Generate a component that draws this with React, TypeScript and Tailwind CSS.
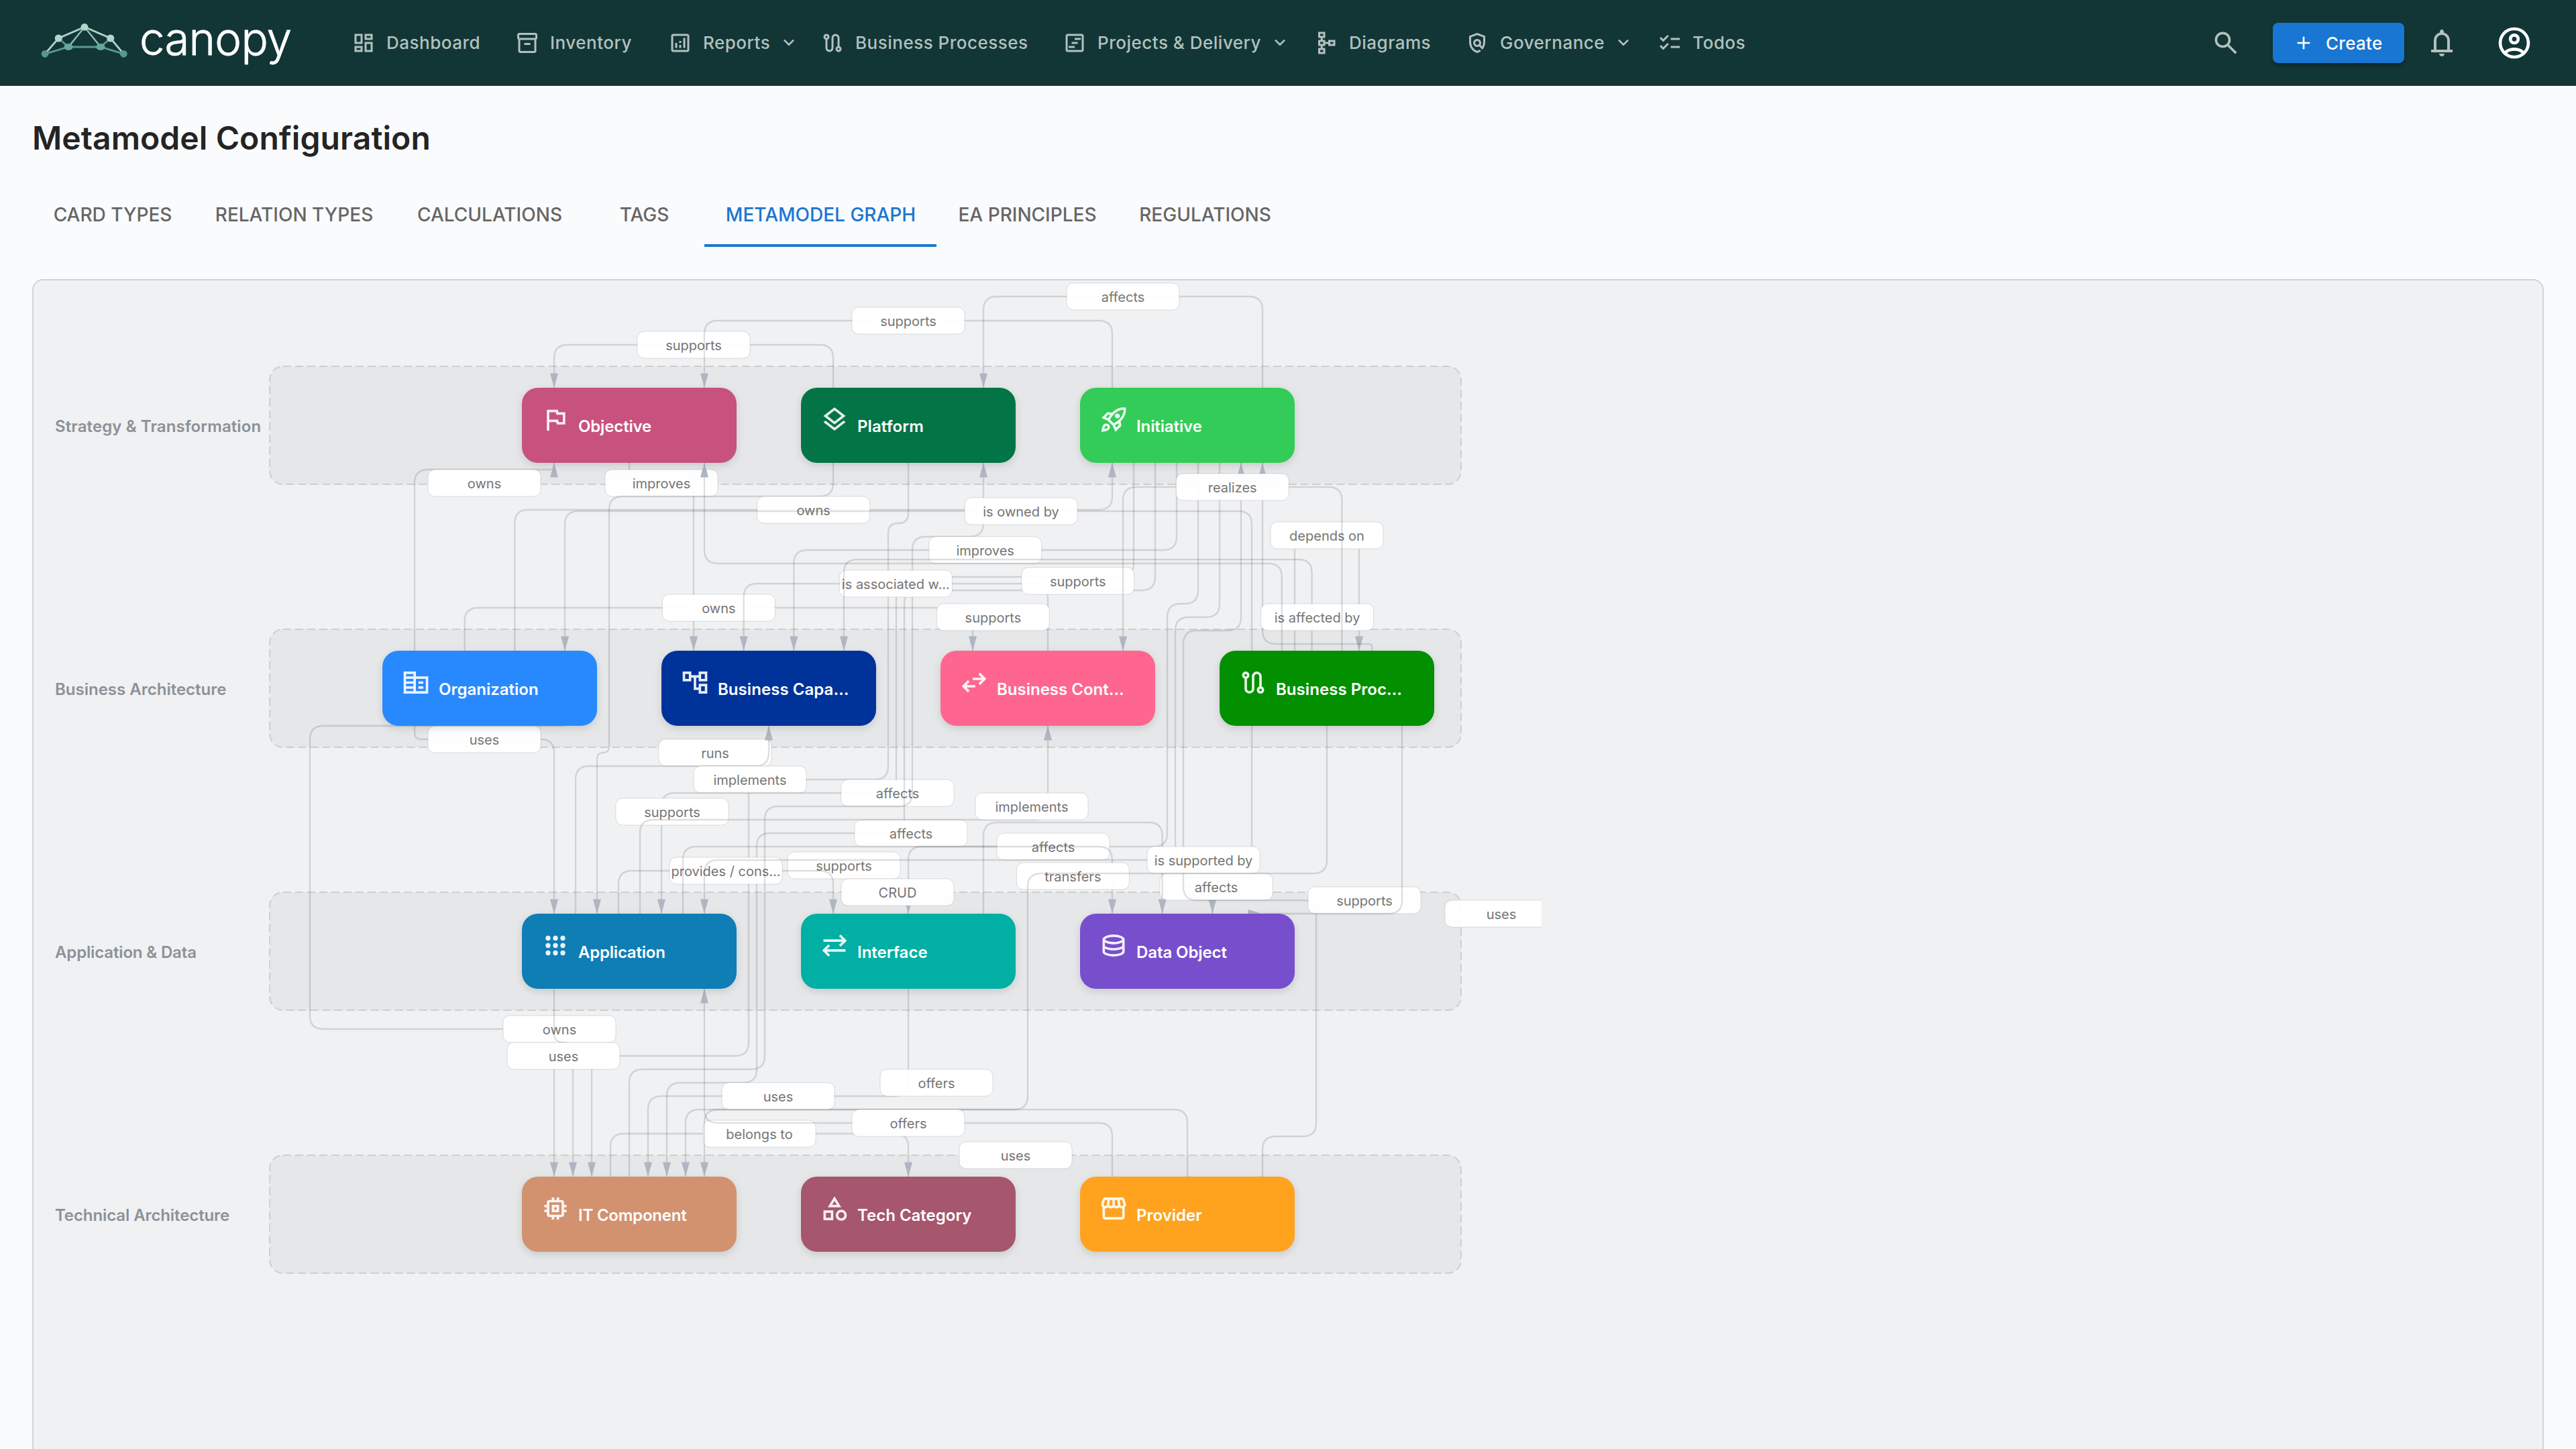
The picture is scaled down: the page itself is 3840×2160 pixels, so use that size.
import clsx from "clsx";

// Outlined icon glyphs, all on a 960 unit grid
const ICONS: Record<string, string> = {
    dashboard: "M520-600v-240h320v240H520ZM120-440v-400h320v400H120Zm400 320v-400h320v400H520Zm-400 0v-240h320v240H120Zm80-400h160v-240H200v240Zm400 320h160v-240H600v240Zm0-480h160v-80H600v80ZM200-200h160v-80H200v80Z",
    inventory: "M200-80q-33 0-56.5-23.5T120-160v-451q-18-11-29-28.5T80-680v-120q0-33 23.5-56.5T160-880h640q33 0 56.5 23.5T880-800v120q0 23-11 40.5T840-611v451q0 33-23.5 56.5T760-80H200Zm0-520v440h560v-440H200Zm-40-80h640v-120H160v120Zm200 280h240v-80H360v80Z",
    analytics: "M280-280h80v-200h-80v200Zm320 0h80v-400h-80v400Zm-160 0h80v-120h-80v120Zm0-200h80v-80h-80v80ZM200-120q-33 0-56.5-23.5T120-200v-560q0-33 23.5-56.5T200-840h560q33 0 56.5 23.5T840-760v560q0 33-23.5 56.5T760-120H200Zm0-80h560v-560H200v560Z",
    route: "M360-120q-66 0-113-47t-47-113v-327q-35-13-57.5-43.5T120-720q0-50 35-85t85-35q50 0 85 35t35 85q0 39-22.5 69.5T280-607v327q0 33 23.5 56.5T360-200q33 0 56.5-23.5T440-280v-400q0-66 47-113t113-47q66 0 113 47t47 113v327q35 13 57.5 43.5T840-240q0 50-35 85t-85 35q-50 0-85-35t-35-85q0-39 22.5-70t57.5-43v-327q0-33-23.5-56.5T600-760q-33 0-56.5 23.5T520-680v400q0 66-47 113t-113 47ZM240-680q17 0 28.5-11.5T280-720q0-17-11.5-28.5T240-760q-17 0-28.5 11.5T200-720q0 17 11.5 28.5T240-680Zm480 480q17 0 28.5-11.5T760-240q0-17-11.5-28.5T720-280q-17 0-28.5 11.5T680-240q0 17 11.5 28.5T720-200Z",
    timeline: "M240-280h240v-80H240v80Zm120-160h240v-80H360v80Zm120-160h240v-80H480v80ZM200-120q-33 0-56.5-23.5T120-200v-560q0-33 23.5-56.5T200-840h560q33 0 56.5 23.5T840-760v560q0 33-23.5 56.5T760-120H200Zm0-80h560v-560H200v560Z",
    schema: "M160-40v-240h100v-80H160v-240h100v-80H160v-240h280v240H340v80h100v80h120v-80h280v240H560v-80H440v80H340v80h100v240H160Zm80-80h120v-80H240v80Zm0-320h120v-80H240v80Zm400 0h120v-80H640v80ZM240-760h120v-80H240v80Z",
    policy: "M480-80q-139-35-229.5-159.5T160-516v-244l320-120 320 120v244q0 85-29 163.5T688-214L560-342q-18 11-38.5 16.5T480-320q-66 0-113-47t-47-113q0-66 47-113t113-47q66 0 113 47t47 113q0 22-5.5 42.5T618-398l60 60q20-41 31-86t11-92v-189l-240-90-240 90v189q0 121 68 220t172 132q26-8 49.5-20.5T576-214l56 56q-33 27-71.5 47T480-80Zm0-320q33 0 56.5-23.5T560-480q0-33-23.5-56.5T480-560q-33 0-56.5 23.5T400-480q0 33 23.5 56.5T480-400Z",
    checklist: "M222-200 80-342l56-56 85 85 170-170 56 57-225 226Zm0-320L80-662l56-56 85 85 170-170 56 57-225 226Zm298 240v-80h360v80H520Zm0-320v-80h360v80H520Z",
    expand: "M480-344 240-584l56-56 184 184 184-184 56 56-240 240Z",
    add: "M440-440H200v-80h240v-240h80v240h240v80H520v240h-80v-240Z",
    search: "M784-120 532-372q-30 24-69 38t-83 14q-109 0-184.5-75.5T120-580q0-109 75.5-184.5T380-840q109 0 184.5 75.5T640-580q0 44-14 83t-38 69l252 252-56 56ZM380-400q75 0 127.5-52.5T560-580q0-75-52.5-127.5T380-760q-75 0-127.5 52.5T200-580q0 75 52.5 127.5T380-400Z",
    bell: "M160-200v-80h80v-280q0-83 50-147.5T420-792v-28q0-25 17.5-42.5T480-880q25 0 42.5 17.5T540-820v28q80 20 130 84.5T720-560v280h80v80H160Zm320-300Zm0 420q-33 0-56.5-23.5T400-160h160q0 33-23.5 56.5T480-80ZM320-280h320v-280q0-66-47-113t-113-47q-66 0-113 47t-47 113v280Z",
    account: "M234-276q51-39 114-61.5T480-360q69 0 132 22.5T726-276q35-41 54.5-93T800-480q0-133-93.5-226.5T480-800q-133 0-226.5 93.5T160-480q0 59 19.5 111t54.5 93Zm246-164q-59 0-99.5-40.5T340-580q0-59 40.5-99.5T480-720q59 0 99.5 40.5T620-580q0 59-40.5 99.5T480-440Zm0 360q-83 0-156-31.5T197-197q-54-54-85.5-127T80-480q0-83 31.5-156T197-763q54-54 127-85.5T480-880q83 0 156 31.5T763-763q54 54 85.5 127T880-480q0 83-31.5 156T763-197q-54 54-127 85.5T480-80Zm0-80q53 0 100-15.5t86-44.5q-39-29-86-44.5T480-280q-53 0-100 15.5T294-220q39 29 86 44.5T480-160Zm0-360q26 0 43-17t17-43q0-26-17-43t-43-17q-26 0-43 17t-17 43q0 26 17 43t43 17Z",
    flag: "M200-120v-680h360l16 80h224v400H520l-16-80H280v280h-80Zm386-280h134v-240H510l-16-80H280v240h290l16 80Z",
    layers: "M480-118 120-398l66-50 294 228 294-228 66 50-360 280Zm0-202L120-600l360-280 360 280-360 280Zm0-102 230-178-230-178-230 178 230 178Z",
    rocket: "m226-559 78 33q14-28 29-54t33-52l-56-11-84 84Zm142 83 114 113q42-16 90-49t90-75q70-70 109.5-155.5T806-800q-72-5-158 34.5T492-656q-42 42-75 90t-49 90Zm178-65q-23-23-23-56.5t23-56.5q23-23 57-23t57 23q23 23 23 56.5T660-541q-23 23-57 23t-57-23Zm19 321 84-84-11-56q-26 18-52 32.5T532-299l33 79Zm313-653q19 121-23.5 235.5T708-419l20 99q4 20-2 39t-20 33L538-80l-84-197-171-171-197-84 167-168q14-14 33.5-20t39.5-2l99 20q104-104 218-147t235-24ZM157-321q35-35 85.5-35.5T328-322q35 35 34.5 85.5T327-151q-25 25-83.5 43T82-76q14-103 32-161.5t43-83.5Zm57 56q-10 10-20 36.5T180-175q27-4 53.5-13.5T270-208q12-12 13-29t-11-29q-12-12-29-11.5T214-265Z",
    corporate: "M80-120v-720h400v160h400v560H80Zm80-80h240v-80H160v80Zm0-160h240v-80H160v80Zm0-160h240v-80H160v80Zm0-160h240v-80H160v80Zm320 480h320v-400H480v400Zm80-240v-80h160v80H560Zm0 160v-80h160v80H560Z",
    tree: "M600-120v-120H440v-400h-80v120H80v-320h280v120h240v-120h280v320H600v-120h-80v320h80v-120h280v320H600ZM680-600h120v-160H680v160Zm0 400h120v-160H680v160ZM160-600h120v-160H160v160Z",
    swap: "M280-160 80-360l200-200 56 57-103 103h287v80H233l103 103-56 57Zm400-240-56-57 103-103H440v-80h287L624-743l56-57 200 200-200 200Z",
    sync: "M280-120 80-320l200-200 57 56-104 104h607v80H233l104 104-57 56Zm400-320-57-56 104-104H120v-80h607L623-784l57-56 200 200-200 200Z",
    apps: "M240-160a80 80 0 1 1 0-160a80 80 0 1 1 0 160Zm240 0a80 80 0 1 1 0-160a80 80 0 1 1 0 160Zm240 0a80 80 0 1 1 0-160a80 80 0 1 1 0 160ZM240-400a80 80 0 1 1 0-160a80 80 0 1 1 0 160Zm240 0a80 80 0 1 1 0-160a80 80 0 1 1 0 160Zm240 0a80 80 0 1 1 0-160a80 80 0 1 1 0 160ZM240-640a80 80 0 1 1 0-160a80 80 0 1 1 0 160Zm240 0a80 80 0 1 1 0-160a80 80 0 1 1 0 160Zm240 0a80 80 0 1 1 0-160a80 80 0 1 1 0 160Z",
    database: "M480-120q-151 0-255.5-46.5T120-280v-400q0-66 105.5-113T480-840q149 0 254.5 47T840-680v400q0 67-104.5 113.5T480-120Zm0-479q89 0 179-25.5T760-679q-11-29-100.5-55T480-760q-91 0-178.5 25.5T200-679q14 30 101.5 55T480-599Zm0 199q42 0 81-4t74.5-11.5q35.5-7.5 67-18.5t57.5-25v-120q-26 14-57.5 25t-67 18.5Q600-528 561-524t-81 4q-42 0-82-4t-75.5-11.5Q287-543 256-554t-56-25v120q25 14 56 25t66.5 18.5Q358-408 398-404t82 4Zm0 200q46 0 93.5-7t87.5-18.5q40-11.5 67-26t32-29.5v-98q-26 14-57.5 25t-67 18.5Q600-328 561-324t-81 4q-42 0-82-4t-75.5-11.5Q287-343 256-354t-56-25v99q5 15 31.5 29t66.5 25.5q40 11.5 88 18.5t94 7Z",
    memory: "M360-360v-240h240v240H360Zm80-80h80v-80h-80v80Zm-80 320v-80h-80q-33 0-56.5-23.5T200-280v-80h-80v-80h80v-80h-80v-80h80v-80q0-33 23.5-56.5T280-760h80v-80h80v80h80v-80h80v80h80q33 0 56.5 23.5T760-680v80h80v80h-80v80h80v80h-80v80q0 33-23.5 56.5T680-200h-80v80h-80v-80h-80v80h-80Zm320-160v-400H280v400h400Z",
    category: "m260-520 220-360 220 360H260ZM700-80q-75 0-127.5-52.5T520-260q0-75 52.5-127.5T700-440q75 0 127.5 52.5T880-260q0 75-52.5 127.5T700-80Zm-580-20v-320h320v320H120Zm580-60q42 0 71-29t29-71q0-42-29-71t-71-29q-42 0-71 29t-29 71q0 42 29 71t71 29Zm-500-20h160v-160H200v160Zm202-420h156l-78-126-78 126Z",
    storefront: "M841-518v318q0 33-23.5 56.5T761-120H201q-33 0-56.5-23.5T121-200v-318q-23-21-35.5-54t-.5-72l42-136q8-26 28.5-43t47.5-17h556q27 0 47 16.5t29 43.5l42 136q12 39-.5 71T841-518Zm-272-42q27 0 41-18.5t11-41.5l-22-140h-78v148q0 21 14 36.5t34 15.5Zm-180 0q23 0 37.5-15.5T441-612v-148h-78l-22 140q-4 24 10.5 42t37.5 18Zm-178 0q18 0 31.5-13t16.5-33l22-154h-78l-40 134q-6 20 6.5 43t41.5 23Zm540 0q29 0 42-23t6-43l-42-134h-76l22 154q3 20 16.5 33t31.5 13ZM201-200h560v-282q-5 2-6.5 2H751q-27 0-47.5-9T663-518q-18 18-41 28t-49 10q-27 0-50.5-10T481-518q-17 18-39.5 28T393-480q-29 0-52.5-10T299-518q-21 21-41.5 29.5T211-480h-4.5q-2.5 0-5.5-2v282Z",
};

function Icon({ name, className }: { name: string; className?: string }) {
    return (
        <svg viewBox="0 -960 960 960" fill="currentColor" className={clsx("shrink-0", className)}>
            <path d={ICONS[name]} />
        </svg>
    );
}

const NAV = [
    { label: "Dashboard", icon: "dashboard", width: "w-[244px]" },
    { label: "Inventory", icon: "inventory", width: "w-[228px]" },
    { label: "Reports", icon: "analytics", width: "w-[227px]", menu: true },
    { label: "Business Processes", icon: "route", width: "w-[361px]" },
    { label: "Projects & Delivery", icon: "timeline", width: "w-[375px]", menu: true },
    { label: "Diagrams", icon: "schema", width: "w-[225px]" },
    { label: "Governance", icon: "policy", width: "w-[287px]", menu: true },
    { label: "Todos", icon: "checklist", width: "w-[180px]" },
];

const TABS = [
    { label: "CARD TYPES", width: "w-[239px]" },
    { label: "RELATION TYPES", width: "w-[302px]" },
    { label: "CALCULATIONS", width: "w-[281px]" },
    { label: "TAGS", width: "w-[180px]" },
    { label: "METAMODEL GRAPH", width: "w-[346px]", active: true },
    { label: "EA PRINCIPLES", width: "w-[270px]" },
    { label: "REGULATIONS", width: "w-[260px]" },
];

const LAYERS = [
    { label: "Strategy & Transformation", y: 546, tracking: 0.1 },
    { label: "Business Architecture", y: 938, tracking: 0 },
    { label: "Application & Data", y: 1330, tracking: -0.15 },
    { label: "Technical Architecture", y: 1722, tracking: -0.1 },
];

const NODES = [
    { label: "Objective", icon: "flag", color: "#c7527d", x: 778, y: 578, tracking: -0.15 },
    { label: "Platform", icon: "layers", color: "#027446", x: 1194, y: 578, tracking: 0.1 },
    { label: "Initiative", icon: "rocket", color: "#33cc58", x: 1610, y: 578, tracking: -0.1 },
    { label: "Organization", icon: "corporate", color: "#2889ff", x: 570, y: 970 },
    { label: "Business Capa…", icon: "tree", color: "#003399", x: 986, y: 970, tracking: 0.05 },
    { label: "Business Cont…", icon: "swap", color: "#fe6690", x: 1402, y: 970 },
    { label: "Business Proc…", icon: "route", color: "#028f00", x: 1818, y: 970, tracking: 0.05 },
    { label: "Application", icon: "apps", color: "#0f7eb5", x: 778, y: 1362, tracking: -0.22 },
    { label: "Interface", icon: "sync", color: "#02afa4", x: 1194, y: 1362 },
    { label: "Data Object", icon: "database", color: "#774fcc", x: 1610, y: 1362, tracking: -0.1 },
    { label: "IT Component", icon: "memory", color: "#d29270", x: 778, y: 1754, tracking: -0.22 },
    { label: "Tech Category", icon: "category", color: "#a6566d", x: 1194, y: 1754 },
    { label: "Provider", icon: "storefront", color: "#ffa31f", x: 1610, y: 1754 },
];

type Point = [number, number];
type Edge = { pts: Point[]; label?: string; at?: Point };

// Drawn in order, so later edges run over the labels of earlier ones
const EDGES: Edge[] = [
    { pts: [[1242, 578], [1242, 514], [826, 514], [826, 578]], label: "supports", at: [1034, 514] },
    { pts: [[1658, 578], [1658, 478], [1050, 478], [1050, 578]], label: "supports", at: [1354, 478] },
    { pts: [[1882, 578], [1882, 442], [1466, 442], [1466, 578]], label: "affects", at: [1674, 442] },
    { pts: [[938, 690], [938, 720], [1034, 720], [1034, 970]], label: "improves", at: [986, 720] },
    { pts: [[1242, 690], [1242, 740], [908, 740], [908, 1122], [890, 1122], [890, 1362]], label: "runs", at: [1066, 1122] },
    { pts: [[618, 970], [618, 700], [826, 700], [826, 690]], label: "owns", at: [722, 720] },
    { pts: [[767.33, 970], [767.33, 760], [1658, 760], [1658, 690]], label: "owns", at: [1212.67, 760] },
    { pts: [[692.67, 970], [692.67, 906], [1450, 906], [1450, 970]], label: "owns", at: [1071.33, 906] },
    { pts: [[1354, 690], [1354, 780], [1324, 780], [1324, 1162], [1116, 1162], [1116, 1574], [882, 1574], [882, 1754]], label: "supports", at: [1258, 1290] },
    { pts: [[858, 1362], [858, 1142], [1146, 1142], [1146, 1082]], label: "implements", at: [1118, 1162] },
    { pts: [[1690, 690], [1690, 860], [1336, 860], [1336, 1182], [986, 1182], [986, 1362]], label: "affects", at: [1338, 1182] },
    { pts: [[1722, 690], [1722, 880], [1348, 880], [1348, 1242], [1128, 1242], [1128, 1614], [994, 1614], [994, 1754]], label: "affects", at: [1358, 1242] },
    { pts: [[922, 1362], [922, 1298], [1242, 1298], [1242, 1362]], label: "provides / cons…", at: [1082, 1298] },
    { pts: [[938, 1754], [938, 1594], [1140, 1594], [1140, 1202], [1360, 1202], [1360, 800], [1466, 800], [1466, 690]], label: "supports", at: [1002, 1210] },
    { pts: [[954, 1362], [954, 1222], [1562, 1222], [1562, 1082]], label: "implements", at: [1538, 1202] },
    { pts: [[1866, 970], [1866, 762], [842, 762], [842, 970]], label: "is owned by", at: [1522, 762] },
    { pts: [[1562, 970], [1562, 870], [1108.67, 870], [1108.67, 970]], label: "is associated w…", at: [1335.33, 870] },
    { pts: [[1754, 690], [1754, 820], [1183.33, 820], [1183.33, 970]], label: "improves", at: [1468.67, 820] },
    { pts: [[1930, 970], [1930, 798], [2026, 798], [2026, 970]], label: "depends on", at: [1978, 798] },
    { pts: [[1955.6, 970], [1955.6, 834], [1258, 834], [1258, 970]], label: "supports", at: [1606.8, 866] },
    { pts: [[2045.2, 970], [2045.2, 960], [1882, 960], [1882, 690]], label: "is affected by", at: [1963.6, 920] },
    { pts: [[1910.8, 970], [1910.8, 840], [1050, 840], [1050, 690]], label: "supports", at: [1480.4, 920] },
    { pts: [[1786, 690], [1786, 900], [1740, 900], [1740, 1262], [1354, 1262], [1354, 1362]], label: "affects", at: [1570, 1262] },
    { pts: [[1018, 1362], [1018, 1262], [1658, 1262], [1658, 1362]], label: "CRUD", at: [1338, 1330] },
    { pts: [[1818, 690], [1818, 920], [1752, 920], [1752, 1322], [1807.33, 1322], [1807.33, 1362]], label: "affects", at: [1813, 1322] },
    { pts: [[1466, 1362], [1466, 1226], [1732.67, 1226], [1732.67, 1362]], label: "transfers", at: [1599.33, 1306] },
    { pts: [[1882, 1754], [1882, 1694], [1962, 1694], [1962, 1342], [1764, 1342], [1764, 940], [1850, 940], [1850, 690]], label: "supports", at: [2034, 1342] },
    { pts: [[1866, 1082], [1866, 1282], [1050, 1282], [1050, 1362]], label: "is supported by", at: [1794, 1282] },
    { pts: [[1978, 1082], [1978, 1302], [1532, 1302], [1532, 1654], [1022, 1654], [1022, 1754]], label: "uses", at: [1514, 1722] },
    { pts: [[2090, 1082], [2090, 1362], [1882, 1362]], label: "uses", at: [2238, 1362] },
    { pts: [[618, 1082], [618, 1102], [826, 1102], [826, 1362]], label: "uses", at: [722, 1102] },
    { pts: [[842, 1082], [462, 1082], [462, 1534], [826, 1534], [826, 1754]], label: "owns", at: [834, 1534] },
    { pts: [[826, 1474], [826, 1554], [854, 1554], [854, 1754]], label: "uses", at: [840, 1574] },
    { pts: [[1354, 1474], [1354, 1634], [966, 1634], [966, 1754]], label: "uses", at: [1160, 1634] },
    { pts: [[910, 1754], [910, 1690], [1354, 1690], [1354, 1754]], label: "belongs to", at: [1132, 1690] },
    { pts: [[1770, 1754], [1770, 1654], [1050, 1654], [1050, 1754]], label: "offers", at: [1396, 1614] },
    { pts: [[1658, 1754], [1658, 1674], [1050, 1674], [1050, 1474]], label: "offers", at: [1354, 1674] },
    { pts: [[2000.4, 970], [2000.4, 726], [1674, 726], [1674, 970]], label: "realizes", at: [1837.2, 726] },
];

const CORNER = 20;

// Orthogonal polyline with softened corners
function edgePath(pts: Point[]) {
    let d = `M${pts[0][0]} ${pts[0][1]}`;
    for (let i = 1; i < pts.length - 1; i++) {
        const [px, py] = pts[i - 1];
        const [x, y] = pts[i];
        const [nx, ny] = pts[i + 1];
        const a = Math.abs(x - px) + Math.abs(y - py);
        const b = Math.abs(nx - x) + Math.abs(ny - y);
        const r = Math.min(CORNER, a / 2, b / 2);
        d += `L${x - Math.sign(x - px) * r} ${y - Math.sign(y - py) * r}`;
        d += `Q${x} ${y} ${x + Math.sign(nx - x) * r} ${y + Math.sign(ny - y) * r}`;
    }
    const [ex, ey] = pts[pts.length - 1];
    return `${d}L${ex} ${ey}`;
}

const HEADLESS = ["938,1754"];

function arrowPath(pts: Point[]) {
    const [px, py] = pts[pts.length - 2];
    const [x, y] = pts[pts.length - 1];
    if (HEADLESS.includes(`${x},${y}`)) return "";
    if (y === py) return `M${x} ${y}l-21.6-6v12Z`;
    const s = Math.sign(y - py);
    return px === x ? `M${x} ${y}l-6 ${-21.6 * s}h12Z` : "";
}

function EdgeLine({ edge }: { edge: Edge }) {
    return (
        <g>
            <path d={edgePath(edge.pts)} fill="none" stroke="#000" strokeOpacity={0.125} strokeWidth={2.4} />
            <path d={arrowPath(edge.pts)} fill="#aeb6c2" />
            {edge.label && edge.at && (
                <>
                    <rect
                        x={edge.at[0] - 84}
                        y={edge.at[1] - 20}
                        width={168}
                        height={40}
                        rx={10}
                        fill="#fff"
                        fillOpacity={0.95}
                        stroke="#000"
                        strokeOpacity={0.12}
                        strokeWidth={1}
                    />
                    <text x={edge.at[0]} y={edge.at[1] + 7.5} textAnchor="middle" className="fill-[#757575] text-[20px]">
                        {edge.label}
                    </text>
                </>
            )}
        </g>
    );
}

function MetamodelGraph() {
    return (
        <svg width={2248} height={1520} viewBox="50 418 2248 1520" className="block">
            {LAYERS.map((layer) => (
                <g key={layer.label}>
                    <rect
                        x={402}
                        y={layer.y}
                        width={1776}
                        height={176}
                        rx={20}
                        fill="#000"
                        fillOpacity={0.04}
                        stroke="#000"
                        strokeOpacity={0.12}
                        strokeWidth={2}
                        strokeDasharray="12 6"
                    />
                    <text x={82} y={layer.y + 98} letterSpacing={layer.tracking} className="fill-[#8c9196] text-[24px] font-semibold">
                        {layer.label}
                    </text>
                </g>
            ))}
            {EDGES.map((edge, i) => (
                <EdgeLine key={i} edge={edge} />
            ))}
            {NODES.map((node) => (
                <g key={node.label} transform={`translate(${node.x} ${node.y})`}>
                    <rect width={320} height={112} rx={24} fill={node.color} className="drop-shadow-[0_4px_6px_rgba(0,0,0,0.12)]" />
                    <path
                        d={ICONS[node.icon]}
                        transform="translate(28 69.5) scale(0.045833)"
                        fill="#fff"
                        fillOpacity={0.9}
                    />
                    <text x={84} y={66} letterSpacing={node.tracking} className="fill-white text-[24px] font-semibold">
                        {node.label}
                    </text>
                </g>
            ))}
        </svg>
    );
}

function Logo() {
    return (
        <svg width={392} height={84} viewBox="56 22 392 84" className="shrink-0 overflow-visible">
            <g strokeWidth={2.8} fill="none">
                <path d="M67 80.3 102 70 150 70 184.3 80.3M87.3 57 102 70M164.7 57 150 70" stroke="#599a90" />
                <path d="M102 70 126 40.3 150 70" stroke="#93c1b8" strokeWidth={2.4} />
                <path d="M67 80.3 87.3 57 126 40.3 164.7 57 184.3 80.3" stroke="#aed3cb" />
            </g>
            <g fill="#b1d5cd">
                <circle cx={126} cy={40.3} r={5.4} />
                <circle cx={87.3} cy={57} r={5.6} />
                <circle cx={164.7} cy={57} r={5.6} />
            </g>
            <g fill="#68a79d">
                <ellipse cx={102} cy={70} rx={6.6} ry={5} />
                <ellipse cx={150} cy={70} rx={6.6} ry={5} />
            </g>
            <g fill="#57978d">
                <circle cx={67} cy={80.3} r={5.4} />
                <circle cx={184.3} cy={80.3} r={5.4} />
            </g>
            <text x={208} y={82.3} textLength={227} className="fill-white stroke-white stroke-[0.8px] text-[67px] font-light">
                canopy
            </text>
        </svg>
    );
}

function Header() {
    return (
        <header className="flex h-32 shrink-0 items-center bg-[#113635] pl-14 pr-16 text-[#b3c0bf]">
            <Logo />
            <nav className="ml-[76px] flex flex-1 items-center">
                {NAV.map((item) => (
                    <a key={item.label} className={clsx("flex items-center whitespace-nowrap text-[26px] font-medium", item.width)}>
                        <Icon name={item.icon} className="size-9" />
                        <span className="ml-4 pb-0.5 tracking-[0.5px]">{item.label}</span>
                        {item.menu && <Icon name="expand" className="ml-3 size-8" />}
                    </a>
                ))}
            </nav>
            <Icon name="search" className="size-11" />
            <button className="ml-12 flex h-[60px] w-[196px] items-center rounded-lg bg-[#1976d2] pl-[30px] text-[26px] font-medium text-white shadow-[0_4px_4px_rgba(0,0,0,0.25)]">
                <Icon name="add" className="size-8" />
                <span className="ml-[17px] tracking-[0.3px]">Create</span>
            </button>
            <Icon name="bell" className="ml-8 size-12" />
            <Icon name="account" className="ml-14 size-14 text-white" />
        </header>
    );
}

export default function App() {
    return (
        <div className="flex h-[2160px] w-[3840px] flex-col overflow-hidden bg-[#fafbfd] font-['Inter',sans-serif]">
            <Header />
            <main className="flex flex-1 flex-col px-12 pt-[46px]">
                <h1 className="h-[66px] text-[48px] font-semibold leading-[64px] tracking-[0.08px] text-[#242424]">Metamodel Configuration</h1>
                <div className="mt-8 flex h-24">
                    {TABS.map((tab) => (
                        <button
                            key={tab.label}
                            className={clsx(
                                "flex items-center justify-center border-b-4 pl-px pt-1 text-[28px] font-medium",
                                tab.width,
                                tab.active ? "border-[#1976d2] text-[#1976d2]" : "border-transparent text-[#666666]",
                            )}
                        >
                            {tab.label}
                        </button>
                    ))}
                </div>
                <section className="mt-12 h-[1900px] shrink-0 rounded-2xl border-2 border-black/12 bg-[#eff1f3]">
                    <MetamodelGraph />
                </section>
            </main>
        </div>
    );
}
